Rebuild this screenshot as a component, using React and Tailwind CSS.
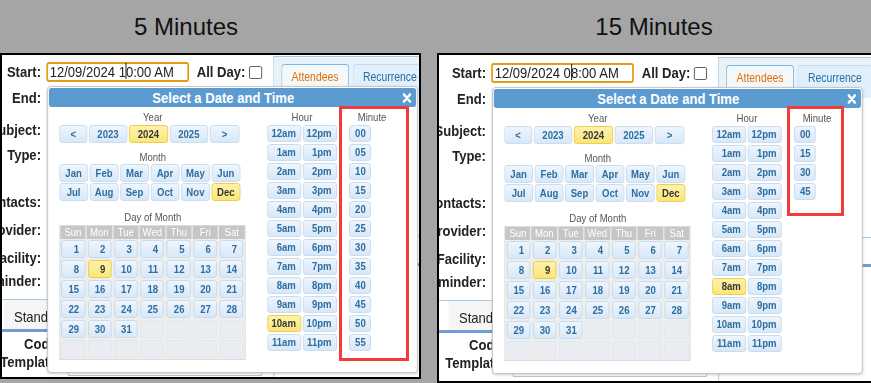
const DAYS = ["Sun", "Mon", "Tue", "Wed", "Thu", "Fri", "Sat"];
const MONTHS = ["Jan", "Feb", "Mar", "Apr", "May", "Jun", "Jul", "Aug", "Sep", "Oct", "Nov", "Dec"];
const YEARS = [["<", "w-[32px]"], ["2023", "w-[44px]"], ["2024", "w-[45px]"], ["2025", "w-[44px]"], [">", "w-[34px]"]];

// 12am | 12pm, 1am | 1pm ...
const HOURS = [];
for (let i = 0; i < 12; i++) {
  const h = i === 0 ? 12 : i;
  HOURS.push(h + "am", h + "pm");
}

const LABELS = [
  ["Start:", "h-[20px]"],
  ["End:", "h-[32px]"],
  ["Subject:", "h-[32px]"],
  ["Type:", "h-[18px]"],
  ["", "h-[24px]"],
  ["Contacts:", "h-[28px]"],
  ["Provider:", "h-[28px]"],
  ["Facility:", "h-[28px]"],
  ["Reminder:", "h-[18px]"],
];

const BTN =
  "rounded-[3px] border border-[#c5dbec] bg-linear-to-b from-[#eef5fd] to-[#d8e8f8] text-[11px] font-bold text-[#2e6e9e]";
const SEL =
  "rounded-[3px] border border-[#efcb3c] bg-linear-to-b from-[#fdf2aa] to-[#fae67a] text-[11px] font-bold text-[#363636]";

function SectionLabel({ children }) {
  return <div className="h-[14px] text-center text-[11px] leading-[14px] text-[#555]">{children}</div>;
}

function CloseIcon() {
  return (
    <svg width="11" height="10" viewBox="0 0 11 10">
      <path d="M2 1.5 L9 8.5 M9 1.5 L2 8.5" stroke="white" strokeWidth="2.6" strokeLinecap="round" />
    </svg>
  );
}

function Picker({ top, hour, minutes }) {
  return (
    <div
      className={`${top} absolute left-[61px] h-[287px] w-[426px] rounded-[4px] border border-[#c4c4c4] bg-white p-px shadow-[0_1px_3px_rgba(0,0,0,0.2)]`}
    >
      <div className="flex h-[19px] items-center rounded-[3px] bg-[#5c9bd1] text-white">
        <div className="flex-1 text-center text-[15px] font-bold leading-[19px]">Select a Date and Time</div>
        <div className="flex w-[21px] justify-center">
          <CloseIcon />
        </div>
      </div>

      <div className="flex pl-[12px] pt-[3px]">
        {/* fecha */}
        <div className="w-[215px] shrink-0">
          <SectionLabel>Year</SectionLabel>
          <div className="mt-px flex gap-[2px]">
            {YEARS.map(([y, w]) => (
              <div key={y} className={`${y === "2024" ? SEL : BTN} ${w} h-[18px] text-center leading-[16px]`}>
                {y}
              </div>
            ))}
          </div>

          <div className="mt-[7px]">
            <SectionLabel>Month</SectionLabel>
          </div>
          <div className="grid w-[208px] grid-cols-6 gap-x-[2px] gap-y-px">
            {MONTHS.map((m) => (
              <div key={m} className={`${m === "Dec" ? SEL : BTN} h-[18px] text-center leading-[16px]`}>
                {m}
              </div>
            ))}
          </div>

          <div className="mt-[9px]">
            <SectionLabel>Day of Month</SectionLabel>
          </div>
          <div className="mt-px w-[214px] border border-[#dcdcdc] bg-[#eeeeee]">
            <div className="grid grid-cols-7 gap-px bg-white">
              {DAYS.map((d) => (
                <div key={d} className="h-[12.5px] bg-[#c6c6c6] text-center text-[11px] leading-[12.5px] text-white">
                  {d}
                </div>
              ))}
            </div>
            <div className="grid grid-cols-7 gap-x-[3px] gap-y-[2px] px-[1.5px] py-px">
              {Array.from({ length: 42 }, (_, i) =>
                i < 31 ? (
                  <div key={i} className={`${i === 8 ? SEL : BTN} h-[18px] pr-[6px] text-right leading-[16px]`}>
                    {i + 1}
                  </div>
                ) : (
                  <div key={i} className="h-[18px] rounded-[3px] border border-[#e2e7ed] bg-[#e9edf2]" />
                )
              )}
            </div>
          </div>
        </div>

        {/* hora */}
        <div className="ml-[24px] w-[80px] shrink-0">
          <SectionLabel>Hour</SectionLabel>
          <div className="mt-px grid grid-cols-2 gap-[2px]">
            {HOURS.map((h) => (
              <div key={h} className={`${h === hour ? SEL : BTN} h-[17px] pr-[5px] text-right leading-[15px]`}>
                {h}
              </div>
            ))}
          </div>
        </div>

        {/* minuto */}
        <div className="ml-[14px] w-[53px] shrink-0">
          <SectionLabel>Minute</SectionLabel>
          <div className="mt-px flex flex-col gap-[2px]">
            {minutes.map((m) => (
              <div key={m} className={`${BTN} h-[17px] w-[25px] pl-[6px] text-left leading-[15px]`}>
                {m}
              </div>
            ))}
          </div>
        </div>
      </div>
    </div>
  );
}

function Panel({ variant }) {
  const left = variant === "left";
  const minutes = left
    ? ["00", "05", "10", "15", "20", "25", "30", "35", "40", "45", "50", "55"]
    : ["00", "15", "30", "45"];
  const [before, after] = left ? ["12/09/2024 1", "0:00 AM"] : ["12/09/2024 0", "8:00 AM"];

  return (
    <div
      className={
        left
          ? "relative h-[326px] w-[421px] shrink-0 overflow-hidden border-2 border-black bg-white"
          : "relative ml-[16px] h-[330px] w-[440px] shrink-0 overflow-hidden border-2 border-r-0 border-black bg-white"
      }
    >
      <div className="w-[560px] origin-top-left [transform:scaleX(0.87)]">
        <div className={left ? "relative ml-[-9.2px]" : "relative pt-px"}>
          <div className="flex items-start">
            {/* formulario */}
            <div className="w-[321px] shrink-0">
              <div className="flex pt-[7px]">
                <div className="w-[54px] shrink-0 text-[15px] font-bold text-[#222]">
                  {LABELS.map(([t, h], i) => (
                    <div key={i} className={`${h} flex items-center justify-end whitespace-nowrap`}>
                      {t}
                    </div>
                  ))}
                </div>
                <div className="ml-[6px] flex h-[20px] items-center">
                  <div className="h-[20px] w-[164px] whitespace-nowrap rounded-[3px] border-2 border-[#e39e15] pl-[2px] text-[15px] leading-[16px] text-[#222]">
                    {before}
                    <span className="relative inline-block w-0">
                      <span className="absolute -top-[14px] left-0 h-[16px] w-px bg-black" />
                    </span>
                    {after}
                  </div>
                  <span className="ml-[9px] whitespace-nowrap text-[15px] font-bold text-[#222]">All Day:</span>
                  <span className="ml-[4px] h-[13px] w-[15px] rounded-[2px] border border-[#555] bg-white" />
                </div>
              </div>

              <div className="mt-[9px] h-px bg-[#a6c9e2]" />
              <div className="h-[29px] pl-[11px]">
                <div className="h-full w-fit bg-[#f6f6f6] px-[12px] pt-[5px] text-[15px] leading-[24px] text-[#222]">
                  Standard
                </div>
              </div>
              <div className="h-[3px] bg-[#6e9fd0]" />
              <div className="flex">
                <div className="mt-[2px] w-[77px] shrink-0 text-[15px] font-bold text-[#222]">
                  <div className="flex h-[20px] items-center justify-end whitespace-nowrap">Code:</div>
                  <div className="flex h-[16px] items-center justify-end whitespace-nowrap">Template:</div>
                </div>
                <div className="ml-[8px] mt-[2px] h-[42px] w-[223px] border border-[#b4c8dc]" />
              </div>
            </div>

            {/* pestañas */}
            <div className="mt-px h-[400px] w-[300px] shrink-0 border-l border-t border-[#a6c9e2] bg-white">
              <div className="flex h-[40px] gap-[4px] bg-[#e9f1f9] pl-[8px] pt-[7px]">
                <div className="h-[33px] whitespace-nowrap rounded-t-[4px] border border-b-0 border-[#79b7e7] bg-[#f5f8f9] px-[11px] text-[12px] leading-[24px] text-[#e17009]">
                  Attendees
                </div>
                <div className="h-[33px] whitespace-nowrap rounded-t-[4px] border border-b-0 border-[#c5dbec] bg-[#dfeffc] px-[11px] text-[12px] leading-[24px] text-[#2e6e9e]">
                  Recurrence
                </div>
              </div>
              <div className="mt-[139px] h-px bg-[#a6c9e2]" />
              <div className="mt-[26px] h-[3px] bg-[#6e9fd0]" />
            </div>
          </div>

          <Picker top={left ? "top-[31px]" : "top-[32px]"} hour={left ? "10am" : "8am"} minutes={minutes} />
        </div>
      </div>

      <div
        className={
          left
            ? "absolute left-[337px] top-[51px] h-[255px] w-[70px] border-[3px] border-[#f23c3c]"
            : "absolute left-[348px] top-[51px] h-[110px] w-[57px] border-[3px] border-[#f23c3c]"
        }
      />
    </div>
  );
}

export default function App() {
  return (
    <div className="h-[383px] w-[871px] overflow-hidden bg-[#a5a5a5] font-['Liberation_Sans',Arial,sans-serif]">
      <div className="flex h-[53px] text-[24px] leading-[53px] text-[#111]">
        <div className="w-[372px] shrink-0 text-center">5 Minutes</div>
        <div className="w-[564px] shrink-0 text-center">15 Minutes</div>
      </div>
      <div className="flex items-start">
        <Panel variant="left" />
        <Panel variant="right" />
      </div>
    </div>
  );
}
